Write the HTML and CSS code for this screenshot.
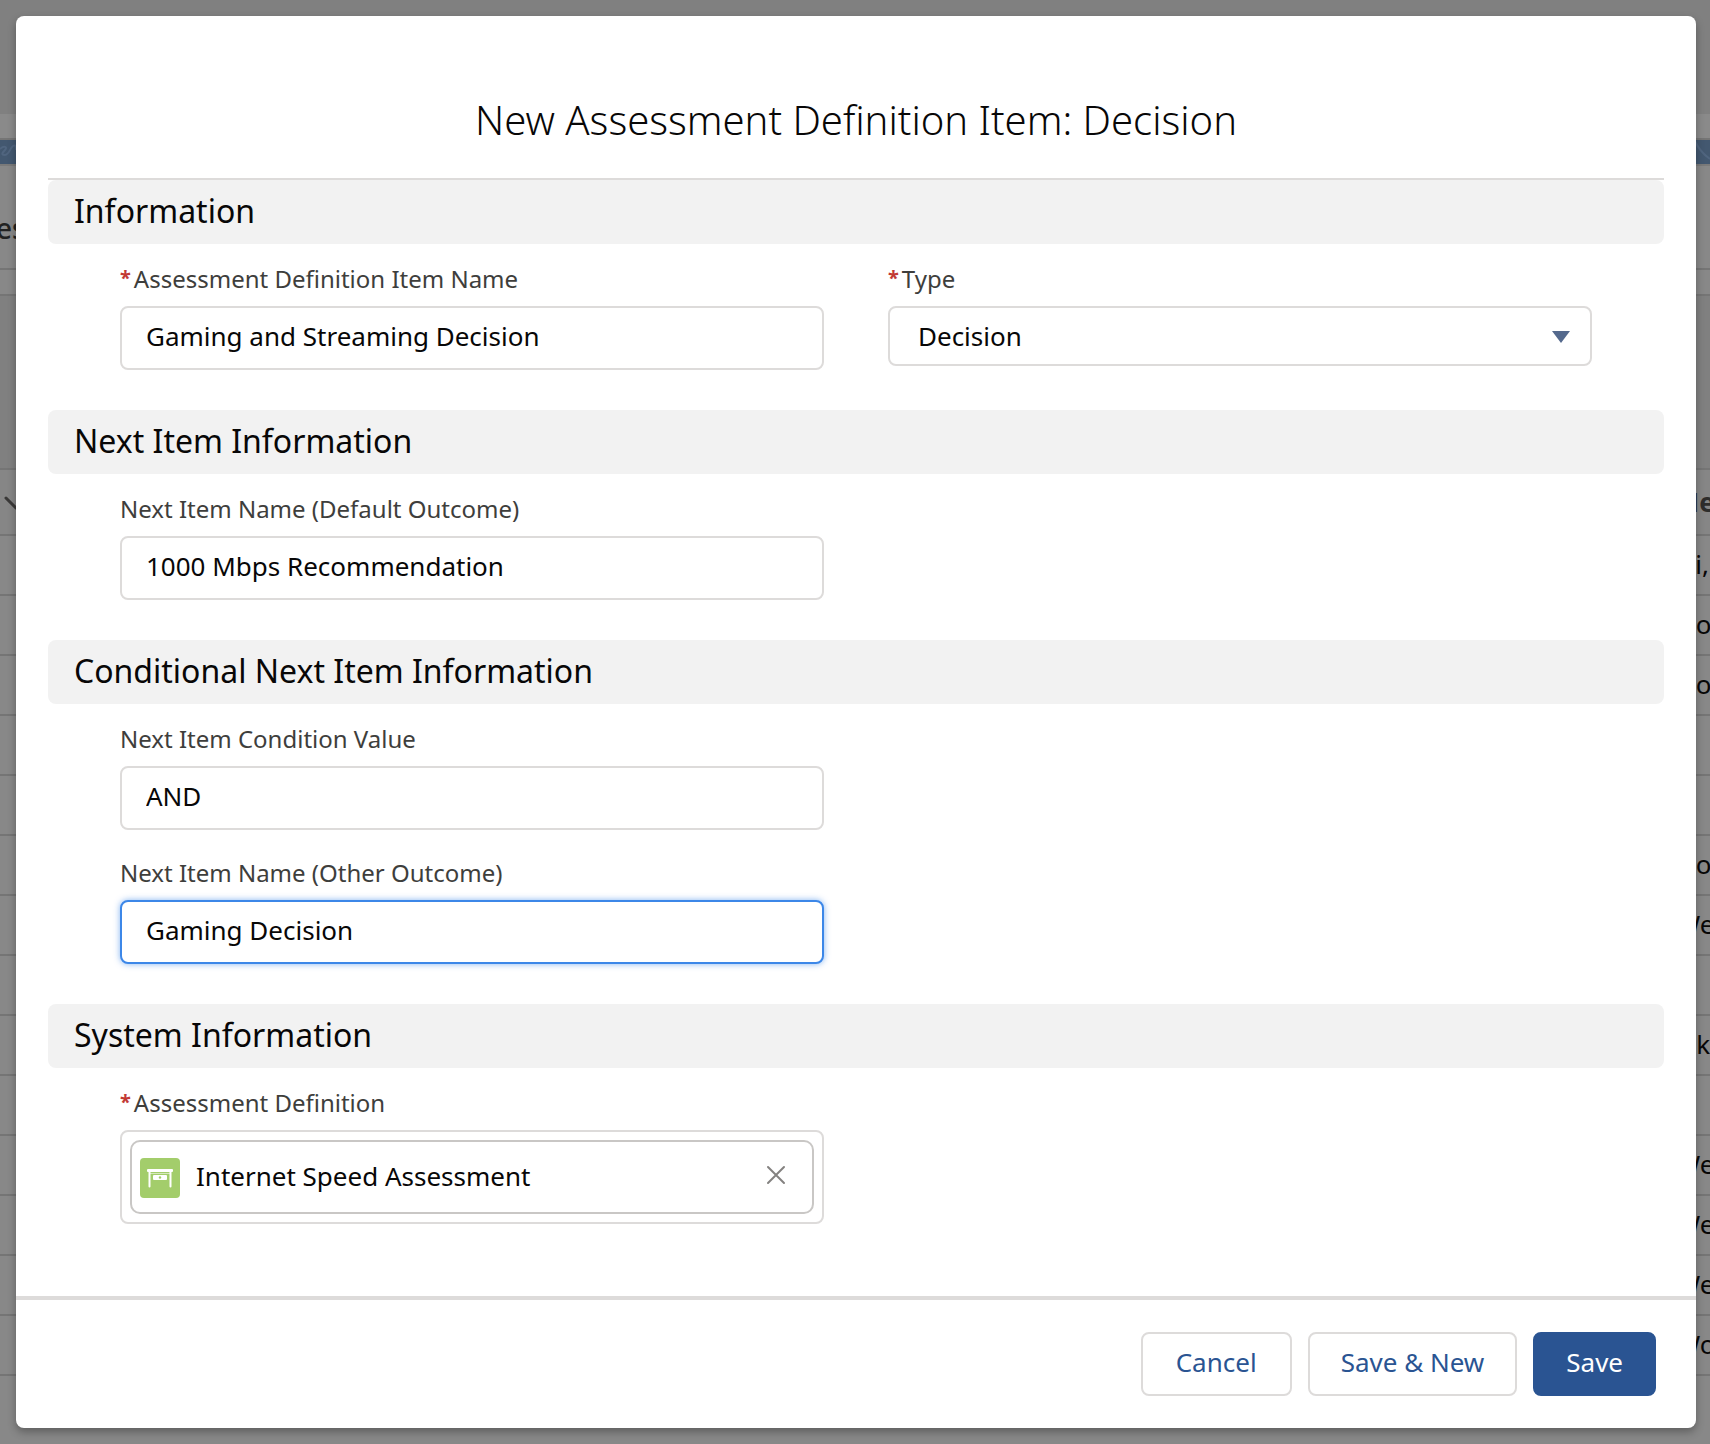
FILE: index.html
```html
<!DOCTYPE html>
<html lang="en">
<head>
<meta charset="utf-8">
<title>New Assessment Definition Item</title>
<link rel="stylesheet" href="styles.css">
</head>
<body>
<div class="app">
  <div class="page" aria-hidden="true">
    <div class="page-top"></div>
    <div class="page-nav"></div>
    <div class="page-banner">
      <svg width="16" height="24" viewBox="0 0 16 24"><path d="M0 9c4-4 8-2 5 1s-4 5 0 5 5-7 8-9 3 2 3 4" /></svg>
      <svg width="16" height="24" viewBox="0 0 16 24"><path d="M1 1c3 7 8 13 15 18" /></svg>
    </div>
    <div class="page-title"><span>es</span></div>
    <div class="page-strip"></div>
    <div class="page-gap"></div>
    <div class="row row-head">
      <svg width="20" height="20" viewBox="0 0 20 20"><path d="M6 6l10 10" /></svg>
      <span class="cell">Ne</span>
    </div>
    <div class="row"><span class="cell">Hi,</span></div>
    <div class="row"><span class="cell">No</span></div>
    <div class="row"><span class="cell">No</span></div>
    <div class="row"></div>
    <div class="row"></div>
    <div class="row"><span class="cell">No</span></div>
    <div class="row"><span class="cell">We</span></div>
    <div class="row"></div>
    <div class="row"><span class="cell">Ok</span></div>
    <div class="row"></div>
    <div class="row"><span class="cell">We</span></div>
    <div class="row"><span class="cell">We</span></div>
    <div class="row"><span class="cell">We</span></div>
    <div class="row"><span class="cell">Wo</span></div>
  </div>

  <div class="overlay">
    <form class="modal" role="dialog" aria-labelledby="modal-title">
      <header class="modal-header">
        <h1 id="modal-title">New Assessment Definition Item: Decision</h1>
      </header>

      <div class="modal-body">
        <section>
          <h2>Information</h2>
          <div class="fields">
            <div class="field">
              <label for="item-name"><span class="required">*</span>Assessment Definition Item Name</label>
              <input id="item-name" type="text" value="Gaming and Streaming Decision">
            </div>
            <div class="field">
              <label for="type"><span class="required">*</span>Type</label>
              <div class="select">
                <select id="type"><option>Decision</option></select>
                <svg width="18" height="12" viewBox="0 0 18 12"><path d="M0 0h18L9 12z" /></svg>
              </div>
            </div>
          </div>
        </section>

        <section>
          <h2>Next Item Information</h2>
          <div class="fields">
            <div class="field">
              <label for="next-default">Next Item Name (Default Outcome)</label>
              <input id="next-default" type="text" value="1000 Mbps Recommendation">
            </div>
          </div>
        </section>

        <section>
          <h2>Conditional Next Item Information</h2>
          <div class="fields">
            <div class="field field-first">
              <label for="condition">Next Item Condition Value</label>
              <input id="condition" type="text" value="AND">
            </div>
            <div class="field field-first">
              <label for="next-other">Next Item Name (Other Outcome)</label>
              <input id="next-other" class="active" type="text" value="Gaming Decision">
            </div>
          </div>
        </section>

        <section>
          <h2>System Information</h2>
          <div class="fields">
            <div class="field">
              <label for="definition"><span class="required">*</span>Assessment Definition</label>
              <div class="lookup">
                <div class="pill">
                  <svg class="pill-icon" width="40" height="40" viewBox="0 0 40 40">
                    <rect width="40" height="40" rx="4" fill="#a3cd6b" />
                    <rect x="7" y="11" width="26" height="3" rx="1" fill="#fff" />
                    <path d="M9.500 14v14.500M30.500 14v14.500" stroke="#fff" stroke-width="2" stroke-linecap="round" />
                    <path d="M9 15.500h22" stroke="#fff" stroke-opacity=".55" />
                    <rect x="13" y="17" width="14" height="5" rx="1" fill="#fff" />
                    <circle cx="20" cy="19.500" r="1.200" fill="#a3cd6b" />
                  </svg>
                  <input id="definition" type="text" value="Internet Speed Assessment" readonly>
                  <button type="button" class="clear" aria-label="Remove">
                    <svg width="20" height="20" viewBox="0 0 20 20"><path d="M2 2l16 16M18 2L2 18" /></svg>
                  </button>
                </div>
              </div>
            </div>
          </div>
        </section>
      </div>

      <footer class="modal-footer">
        <button type="button" class="btn btn-cancel">Cancel</button>
        <button type="button" class="btn">Save &amp; New</button>
        <button type="button" class="btn btn-primary">Save</button>
      </footer>
    </form>
  </div>
</div>
</body>
</html>
```
FILE: styles.css
```css
* {
  box-sizing: border-box;
}

body {
  margin: 0;
  font-family: "Noto Sans", "Open Sans", sans-serif;
  font-size: 26px;
  color: #080707;
  background: #888;
}

svg {
  display: block;
}

.app {
  display: grid;
  min-height: 100vh;
}

.page,
.overlay {
  grid-area: 1 / 1;
}

/* Dimmed record page behind the dialog */
.page {
  overflow: hidden;
}

.page-top {
  height: 114px;
  background: #808080;
}

.page-nav {
  height: 26px;
  background: #8a8a8a;
  border-bottom: 2px solid #757575;
}

.page-banner {
  display: flex;
  justify-content: space-between;
  height: 24px;
  background: #435870;
}

.page-banner path {
  fill: none;
  stroke: #50657f;
  stroke-width: 2;
}

.page-title {
  height: 106px;
  border-top: 2px solid #7a7a7a;
  border-bottom: 2px solid #757575;
  font-size: 28px;
  font-weight: 500;
  line-height: 124px;
  color: #222;
}

.page-title span {
  margin-left: -4px;
}

.page-strip {
  height: 26px;
  border-bottom: 2px solid #757575;
}

.page-gap {
  height: 174px;
  background: #808080;
  border-bottom: 2px solid #757575;
}

.row {
  display: flex;
  align-items: center;
  height: 60px;
  border-bottom: 2px solid #757575;
}

.row-head {
  height: 66px;
  background: #868686;
  color: #2e2d2c;
  font-weight: 700;
}

.row-head path {
  fill: none;
  stroke: #3a3938;
  stroke-width: 3;
  stroke-linecap: round;
}

.cell {
  width: 34px;
  margin-left: auto;
  padding-bottom: 2px;
  white-space: nowrap;
}

.row-head .cell {
  width: 32px;
  padding: 0;
}

/* Dialog */
.overlay {
  display: flex;
  z-index: 1;
  padding: 16px 14px 16px 16px;
}

.modal {
  display: flex;
  flex: 1;
  flex-direction: column;
  background: #fff;
  border-radius: 8px;
  box-shadow: 0 4px 8px rgba(0, 0, 0, 0.3);
}

.modal-header {
  margin: 0 32px;
  padding: 80px 0 34px;
  border-bottom: 2px solid #dddbda;
  text-align: center;
}

h1 {
  margin: 0;
  font-size: 40px;
  font-weight: 300;
  line-height: 48px;
}

.modal-body {
  flex: 1;
  padding: 0 32px;
}

h2 {
  margin: 0;
  padding: 0 26px 2px;
  border-radius: 8px;
  background: #f2f2f2;
  font-size: 32px;
  font-weight: 400;
  line-height: 62px;
}

.fields {
  display: grid;
  grid-template-columns: 1fr 1fr;
  gap: 22px 64px;
  padding: 14px 72px 40px;
}

.field-first {
  grid-column: 1;
}

label {
  display: block;
  margin-bottom: 6px;
  color: #3e3e3c;
  font-size: 24px;
  line-height: 42px;
}

.required {
  margin-right: 3px;
  color: #c23934;
  font-size: 20px;
  font-weight: 700;
  line-height: 20px;
  vertical-align: 3px;
}

input,
select,
button {
  margin: 0;
  font: inherit;
  color: inherit;
}

input,
select {
  display: block;
  width: 100%;
  height: 64px;
  padding: 0 24px 4px;
  border: 2px solid #dddbda;
  border-radius: 8px;
  background: #fff;
  outline: 0;
}

input.active {
  border-color: #3c87e8;
  box-shadow: 0 0 6px #3c87e8a0;
}

.select {
  position: relative;
}

select {
  height: 60px;
  padding: 0 28px;
  appearance: none;
}

.select svg {
  position: absolute;
  top: 25px;
  right: 22px;
  fill: #54698d;
  pointer-events: none;
}

.lookup {
  padding: 8px;
  border: 2px solid #dddbda;
  border-radius: 8px;
}

.pill {
  display: flex;
  align-items: center;
  height: 74px;
  padding: 1px 26px 0 8px;
  border: 2px solid #c9c7c5;
  border-radius: 10px;
}

.pill input {
  flex: 1;
  height: 60px;
  padding: 0 16px 3px;
  border: 0;
}

.clear {
  padding: 0 0 5px;
  border: 0;
  background: none;
}

.clear path {
  stroke: #848280;
  stroke-width: 2;
  stroke-linecap: round;
}

.modal-footer {
  display: flex;
  justify-content: flex-end;
  gap: 16px;
  padding: 32px 40px;
  border-top: 4px solid #dddbda;
}

.btn {
  height: 64px;
  padding: 0 31px 4px;
  border: 2px solid #dddbda;
  border-radius: 8px;
  background: #fff;
  color: #2a5492;
}

.btn-cancel {
  padding: 0 33px 4px;
}

.btn-primary {
  border-color: #2a5492;
  background: #2a5492;
  color: #fff;
}
```
